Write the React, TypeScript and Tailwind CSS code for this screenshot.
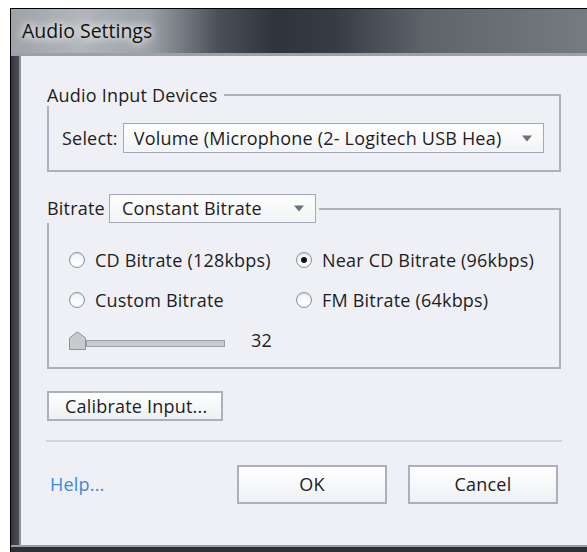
import React from 'react';

const Caret: React.FC = () => (
  <svg width="10" height="7" viewBox="0 0 10 7" className="shrink-0">
    <path d="M0 0.5 L10 0.5 L5 6.5 Z" fill="#6e717a" />
  </svg>
);

const Dropdown: React.FC<{ value: string; className?: string }> = ({ value, className }) => (
  <div
    className={`flex items-center border border-[#a4a8b4] shadow-[inset_0_0_0_1px_#f7f8fa] bg-[linear-gradient(#fefefe,#f2f3f6)] pr-[11px] ${className ?? ''}`}
  >
    <span className="flex-1 whitespace-nowrap overflow-hidden">{value}</span>
    <Caret />
  </div>
);

const Radio: React.FC<{ label: string; checked?: boolean }> = ({ label, checked }) => (
  <label className="flex items-center gap-[10px] leading-[24px]">
    <span className="w-[16px] h-[16px] rounded-full border border-[#8c909a] bg-[linear-gradient(#f4f5f7,#ffffff)] shadow-[inset_0_1px_2px_rgba(0,0,0,0.12)] flex items-center justify-center">
      {checked && <span className="w-[6px] h-[6px] rounded-full bg-[#141414]" />}
    </span>
    <span>{label}</span>
  </label>
);

const PushButton: React.FC<{ label: string; className?: string }> = ({ label, className }) => (
  <button
    className={`flex items-center justify-center border-2 border-[#adb0bc] bg-[linear-gradient(#ffffff,#eef0f3)] ${className ?? ''}`}
  >
    {label}
  </button>
);

// slider thumb: small house shape pointing up
const Thumb: React.FC = () => (
  <svg width="17" height="19" viewBox="0 0 17 19" className="shrink-0">
    <path d="M0.5 18.5 L0.5 7 L8.5 0.8 L16.5 7 L16.5 18.5 Z" fill="#c9cacd" stroke="#8f9197" />
  </svg>
);

const GroupHeader: React.FC<{ children: React.ReactNode; height: string; lineTop: string }> = ({ children, height, lineTop }) => (
  <div className={`flex items-start ${height}`}>
    {children}
    <div className={`flex-1 self-stretch border-t-2 border-r-2 border-[#aeb1bd] ${lineTop}`} />
  </div>
);

export default function App() {
  return (
    <div className="w-[587px] h-[552px] overflow-hidden bg-white pt-[8px] pl-[10px] font-['Open_Sans','Noto_Sans',sans-serif] text-[18px] tracking-[0.2px] text-[#1d1d22]">
      <div className="h-full flex flex-col border-t border-l border-black bg-[#3c4047]">
        {/* caption */}
        <div className="h-[44px] shrink-0 flex items-center pl-[11px] bg-[linear-gradient(90deg,#9ea3a8_0%,#b2b6ba_12%,#9ca1a7_24%,#4a5059_36%,#2e343e_46%,#363c45_56%,#5f646b_72%,#767b80_100%)]">
          <span className="text-[19.5px] tracking-[0px] leading-[26px] text-[#111] [text-shadow:0_0_8px_#fff,0_0_12px_#fff]">Audio Settings</span>
        </div>
        <div className="h-[3px] shrink-0 bg-[#9da1a6]" />

        <div className="flex-1 flex">
          <div className="w-[8px] shrink-0 bg-[linear-gradient(90deg,#33373d,#4a4e55)]" />
          <div className="flex-1 flex flex-col border-l-2 border-[#8e9298] bg-[#eff0f5] px-[26px] pt-[28px]">
            {/* input devices */}
            <GroupHeader height="h-[22px]" lineTop="mt-[10px] ml-[6px]">
              <span className="leading-[22px]">Audio Input Devices</span>
            </GroupHeader>
            <div className="h-[66px] border-l-2 border-r-2 border-b-2 border-[#aeb1bd] flex items-start pt-[17px] pl-[13px] pr-[15px]">
              <span className="leading-[30px] mr-[5px]">Select:</span>
              <Dropdown value="Volume (Microphone (2- Logitech USB Hea)" className="flex-1 h-[30px] pl-[10px]" />
            </div>

            {/* bitrate */}
            <div className="mt-[22px]">
              <GroupHeader height="h-[29px]" lineTop="mt-[14px] ml-[3px]">
                <span className="leading-[29px] mr-[4px]">Bitrate</span>
                <Dropdown value="Constant Bitrate" className="w-[207px] h-[29px] pl-[12px] pr-[9px]" />
              </GroupHeader>
              <div className="h-[146px] border-l-2 border-r-2 border-b-2 border-[#aeb1bd] pl-[20px] pt-[25px]">
                <div className="grid grid-cols-[227px_1fr] gap-y-[16px]">
                  <Radio label="CD Bitrate (128kbps)" />
                  <Radio label="Near CD Bitrate (96kbps)" checked />
                  <Radio label="Custom Bitrate" />
                  <Radio label="FM Bitrate (64kbps)" />
                </div>
                <div className="flex items-center mt-[16px]">
                  <Thumb />
                  <div className="w-[139px] h-[7px] border border-[#9a9da5] bg-[#c8cacf] mt-[7px]" />
                  <span className="ml-[26px] leading-[24px]">32</span>
                </div>
              </div>
            </div>

            <PushButton label="Calibrate Input..." className="mt-[22px] w-[176px] h-[30px] justify-start pl-[16px]" />

            <div className="mt-[19px] -mx-[1px] h-[2px] bg-[#d3d5dc]" />

            <div className="mt-[23px] flex items-center">
              <a className="text-[#3b8ad6] pl-[3px] flex-1">Help...</a>
              <PushButton label="OK" className="w-[150px] h-[39px]" />
              <PushButton label="Cancel" className="w-[150px] h-[39px] ml-[21px] mr-[3px]" />
            </div>
            <div className="flex-1" />
          </div>
        </div>
        <div className="h-[2px] shrink-0 bg-[#9a9ea4]" />
        <div className="h-[5px] shrink-0 bg-[#2d3136]" />
      </div>
    </div>
  );
}
